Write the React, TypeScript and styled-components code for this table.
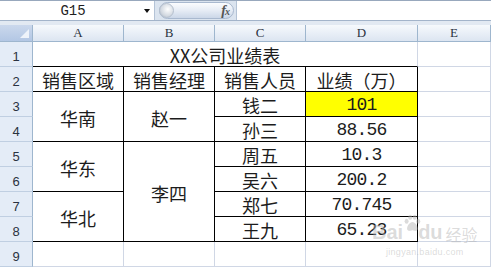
import React from 'react';
import styled, { createGlobalStyle } from 'styled-components';

const GlobalStyle = createGlobalStyle`
  html, body {
    margin: 0;
    padding: 0;
    background: #fff;
  }
  body {
    font-family: "Noto Sans CJK SC", sans-serif;
  }
`;

type Entry = {
    col: number;
    row: number;
    text?: string;
    cs?: number;
    rs?: number;
    edge: 'table' | 'grid' | 'title';
    fill?: string;
    mono?: boolean;
};

const COLUMNS = ['A', 'B', 'C', 'D', 'E'];
const ROWS = [1, 2, 3, 4, 5, 6, 7, 8, 9];

// Excel row n sits on grid row n + 1, column A on grid column 2
const CELLS: Entry[] = [
    { col: 2, row: 2, cs: 4, text: 'XX公司业绩表', edge: 'title' },
    { col: 6, row: 2, edge: 'grid' },

    { col: 2, row: 3, text: '销售区域', edge: 'table' },
    { col: 3, row: 3, text: '销售经理', edge: 'table' },
    { col: 4, row: 3, text: '销售人员', edge: 'table' },
    { col: 5, row: 3, text: '业绩（万）', edge: 'table' },

    { col: 2, row: 4, rs: 2, text: '华南', edge: 'table' },
    { col: 3, row: 4, rs: 2, text: '赵一', edge: 'table' },
    { col: 4, row: 4, text: '钱二', edge: 'table' },
    { col: 5, row: 4, text: '101', edge: 'table', fill: '#ffff00', mono: true },
    { col: 4, row: 5, text: '孙三', edge: 'table' },
    { col: 5, row: 5, text: '88.56', edge: 'table', mono: true },

    { col: 2, row: 6, rs: 2, text: '华东', edge: 'table' },
    { col: 3, row: 6, rs: 4, text: '李四', edge: 'table' },
    { col: 4, row: 6, text: '周五', edge: 'table' },
    { col: 5, row: 6, text: '10.3', edge: 'table', mono: true },
    { col: 4, row: 7, text: '吴六', edge: 'table' },
    { col: 5, row: 7, text: '200.2', edge: 'table', mono: true },

    { col: 2, row: 8, rs: 2, text: '华北', edge: 'table' },
    { col: 4, row: 8, text: '郑七', edge: 'table' },
    { col: 5, row: 8, text: '70.745', edge: 'table', mono: true },
    { col: 4, row: 9, text: '王九', edge: 'table' },
    { col: 5, row: 9, text: '65.23', edge: 'table', mono: true },
];

// plain grid cells: column E of rows 2-8 and the whole of row 9
const EMPTY: Entry[] = [
    ...[3, 4, 5, 6, 7, 8, 9].map((row) => ({ col: 6, row, edge: 'grid' as const })),
    ...[2, 3, 4, 5, 6].map((col) => ({ col, row: 10, edge: 'grid' as const })),
];

export default function App() {
    return (
        <React.Fragment>
            <GlobalStyle />
            <Window>
                <FormulaBar>
                    <NameBox>
                        <NameText>G15</NameText>
                        <DropArrow />
                    </NameBox>
                    <FxPill>
                        <PillKnob />
                        <Fx>
                            f<small>x</small>
                        </Fx>
                    </FxPill>
                    <FormulaInput />
                </FormulaBar>
                <BarGap />
                <Sheet>
                    <Corner>
                        <CornerMark />
                    </Corner>
                    {COLUMNS.map((c) => (
                        <ColHead key={c}>{c}</ColHead>
                    ))}
                    {ROWS.map((r) => (
                        <RowHead key={r} $row={r + 1}>
                            {r}
                        </RowHead>
                    ))}
                    {[...CELLS, ...EMPTY].map((c) => (
                        <Cell
                            key={`${c.col}-${c.row}`}
                            $col={c.col}
                            $row={c.row}
                            $cs={c.cs}
                            $rs={c.rs}
                            $edge={c.edge}
                            $fill={c.fill}
                            $mono={c.mono}
                        >
                            {c.text}
                        </Cell>
                    ))}
                </Sheet>
                <Watermark>
                    <MarkLine>
                        Bai
                        <Paw viewBox="0 0 20 20">
                            <ellipse cx="4" cy="8" rx="2.2" ry="2.8" />
                            <ellipse cx="8" cy="3.5" rx="2.2" ry="2.8" />
                            <ellipse cx="13" cy="3.5" rx="2.2" ry="2.8" />
                            <ellipse cx="17" cy="8" rx="2.2" ry="2.8" />
                            <path d="M10.5 9c-3 0-6 4.5-6 7.5 0 2 2 2.5 3.5 2.2 1.3-.3 1.8-.7 2.5-.7s1.2.4 2.5.7c1.5.3 3.5-.2 3.5-2.2 0-3-3-7.5-6-7.5z" />
                        </Paw>
                        du<MarkCn>经验</MarkCn>
                    </MarkLine>
                    <MarkUrl>jingyan.baidu.com</MarkUrl>
                </Watermark>
            </Window>
        </React.Fragment>
    );
}

const Window = styled.div`
    position: relative;
    width: 491px;
    height: 268px;
    overflow: hidden;
    background: #fff;
`;

const FormulaBar = styled.div`
    display: flex;
    height: 21px;
    box-sizing: border-box;
    border-top: 1px solid #98a8bd;
    border-bottom: 1px solid #a3b4ca;
    background: #dbe4ef;
`;

const NameBox = styled.div`
    display: flex;
    align-items: center;
    width: 155px;
    box-sizing: border-box;
    padding-right: 2px;
    background: #fff;
    border-right: 1px solid #b4c3d6;
`;

const NameText = styled.span`
    flex: 1;
    text-align: center;
    padding-left: 2px;
    font-family: "Liberation Mono", monospace;
    font-size: 14px;
    color: #1e1e1e;
`;

const DropArrow = styled.span`
    width: 0;
    height: 0;
    margin-right: 2px;
    border-left: 3.5px solid transparent;
    border-right: 3.5px solid transparent;
    border-top: 4px solid #111;
`;

const FxPill = styled.div`
    display: flex;
    align-items: center;
    justify-content: space-between;
    width: 75px;
    margin: 1px 2px 1px 4px;
    box-sizing: border-box;
    padding-right: 4px;
    border: 1px solid #a9b9cf;
    border-radius: 9px;
    background: linear-gradient(#fbfcfe, #e6ecf5 50%, #cbd7e8);
`;

const PillKnob = styled.span`
    width: 15px;
    height: 15px;
    margin-left: -1px;
    border-radius: 50%;
    box-sizing: border-box;
    border: 1px solid #b5c0ce;
    background: radial-gradient(circle at 60% 40%, #ffffff, #d3d9e1 60%, #aab4c2);
`;

const Fx = styled.span`
    font-family: "Liberation Serif", serif;
    font-style: italic;
    font-weight: bold;
    font-size: 14px;
    color: #555;
    letter-spacing: -1px;

    small {
        font-size: 10px;
    }
`;

const FormulaInput = styled.div`
    flex: 1;
    background: #fff;
    border-left: 1px solid #b4c3d6;
`;

const BarGap = styled.div`
    height: 4px;
    background: #e2e9f2;
`;

const Sheet = styled.div`
    display: grid;
    grid-template-columns: 33px 91px 91px 91px 112px 1fr;
    grid-template-rows: 17px repeat(9, 25px);
`;

const Corner = styled.div`
    position: relative;
    box-sizing: border-box;
    border-right: 1px solid #9eb6ce;
    border-bottom: 1px solid #9eb6ce;
    background: linear-gradient(#cbd8ec, #b3c7e4);
`;

const CornerMark = styled.span`
    position: absolute;
    right: 3px;
    bottom: 3px;
    width: 0;
    height: 0;
    border-left: 9px solid transparent;
    border-bottom: 9px solid #eef3fa;
`;

const ColHead = styled.div`
    display: flex;
    align-items: center;
    justify-content: center;
    box-sizing: border-box;
    border-right: 1px solid #9eb6ce;
    border-bottom: 1px solid #9eb6ce;
    background: linear-gradient(#f6f9fc, #e9eff7 50%, #dce5f1);
    font-family: "Liberation Serif", serif;
    font-size: 13px;
    color: #2a3240;
`;

const RowHead = styled.div<{ $row: number }>`
    grid-column: 1;
    grid-row: ${(p) => p.$row};
    display: flex;
    align-items: flex-end;
    justify-content: center;
    padding-bottom: 3px;
    box-sizing: border-box;
    border-right: 1px solid #9eb6ce;
    border-bottom: 1px solid #c0cfe2;
    background: #e4ecf7;
    font-family: "Liberation Sans", sans-serif;
    font-size: 13px;
    line-height: 1;
    color: #2a3240;
`;

const Cell = styled.div<{
    $col: number;
    $row: number;
    $cs?: number;
    $rs?: number;
    $edge: 'table' | 'grid' | 'title';
    $fill?: string;
    $mono?: boolean;
}>`
    grid-column: ${(p) => p.$col} / span ${(p) => p.$cs ?? 1};
    grid-row: ${(p) => p.$row} / span ${(p) => p.$rs ?? 1};
    display: flex;
    align-items: center;
    justify-content: center;
    box-sizing: border-box;
    padding-top: 2px;
    border-right: 1px solid ${(p) => (p.$edge === 'table' ? '#000' : '#d0d7e5')};
    border-bottom: 1px solid ${(p) => (p.$edge === 'grid' ? '#d0d7e5' : '#000')};
    background: ${(p) => p.$fill ?? '#fff'};
    font-family: ${(p) => (p.$mono ? '"Liberation Mono", monospace' : '"Noto Sans CJK SC", sans-serif')};
    font-size: 18px;
    letter-spacing: ${(p) => (p.$mono ? '-0.8px' : '0')};
    line-height: 1;
    color: #1c1c1c;
    white-space: nowrap;
`;

const Watermark = styled.div`
    position: absolute;
    left: 372px;
    top: 214px;
    display: flex;
    flex-direction: column;
    align-items: center;
    pointer-events: none;
    color: rgba(175, 175, 175, 0.45);
`;

const MarkLine = styled.div`
    display: flex;
    align-items: flex-end;
    font-family: "Liberation Sans", sans-serif;
    font-weight: bold;
    font-size: 20px;
    line-height: 1;
`;

const Paw = styled.svg`
    width: 18px;
    height: 18px;
    margin: 0 -3px 10px 0;
    fill: rgba(175, 175, 175, 0.45);
`;

const MarkCn = styled.span`
    margin-left: 3px;
    font-family: "Noto Sans CJK SC", sans-serif;
    font-size: 16px;
    font-weight: normal;
`;

const MarkUrl = styled.div`
    margin-top: 5px;
    font-family: "Liberation Sans", sans-serif;
    font-size: 9px;
    letter-spacing: 0.3px;
`;
